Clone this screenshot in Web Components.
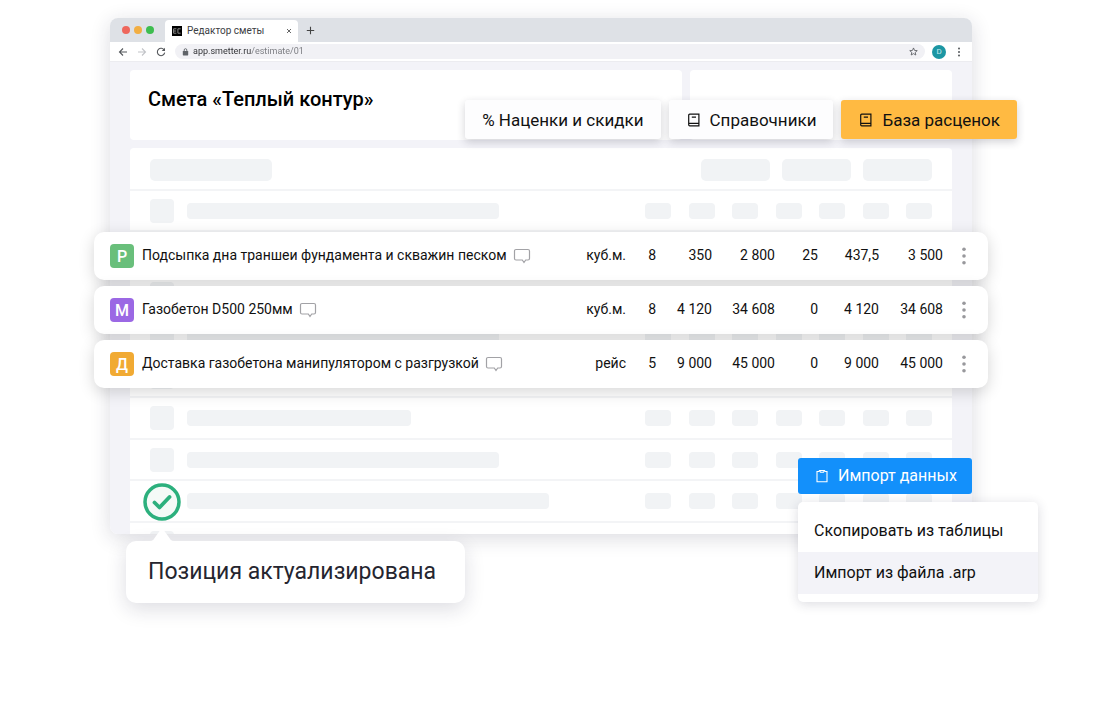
<!DOCTYPE html>
<html lang="ru">
<head>
<meta charset="utf-8">
<meta name="viewport" content="width=device-width, initial-scale=1">
<title>Редактор сметы</title>
<style>
  body { margin: 0; background: #fff; font-family: Roboto, "Liberation Sans", sans-serif; color: #111; }
</style>
</head>
<body>
<estimate-scene></estimate-scene>
<script>
const define = (name, html, init) => {
  const template = document.createElement('template');
  template.innerHTML = html;
  customElements.define(name, class extends HTMLElement {
    constructor() {
      super();
      this.attachShadow({ mode: 'open' }).append(template.content.cloneNode(true));
    }
    connectedCallback() { if (init) init.call(this, this.shadowRoot); }
  });
};

const BASE = `<style>
  *, *::before, *::after { box-sizing: border-box; }
  button { font: inherit; color: inherit; border: 0; padding: 0; margin: 0; background: none; cursor: pointer; }
  svg { display: block; flex: none; }
</style>`;

/* Tab strip and address bar */
define('browser-chrome', BASE + `<style>
  :host { display: block; color: #3c4043; }
  .tabs { display: flex; align-items: flex-end; height: 24px; padding: 0 12px; background: #dee1e6; border-radius: 8px 8px 0 0; }
  .lights { display: flex; gap: 4px; height: 24px; align-items: center; }
  .lights i { width: 8px; height: 8px; border-radius: 50%; background: #ee675c; }
  .lights i:nth-child(2) { background: #f2ae42; }
  .lights i:nth-child(3) { background: #3dbd4f; }
  .tab { display: flex; align-items: center; width: 133px; height: 22px; margin-left: 11px; padding: 0 6px 0 7px; background: #fff; border-radius: 4px 4px 0 0; }
  .tab .title { flex: 1; margin-left: 5px; font-size: 10px; line-height: 20px; text-align: left; white-space: nowrap; }
  .new { margin: 0 0 7px 8px; }
  .bar { display: flex; align-items: center; height: 20px; padding: 0 8px; background: #fff; border-bottom: 1px solid #ececf0; }
  .nav { display: flex; gap: 9px; }
  .url { flex: 1; display: flex; align-items: center; height: 15px; margin: 0 7px 0 9px; padding: 0 7px; border-radius: 8px; background: #f1f1f5; }
  input { flex: 1; min-width: 0; height: 15px; margin: 0 0 0 4px; padding: 0; border: 0; outline: 0; font: 9px/15px Roboto, sans-serif; color: #333;
    background: linear-gradient(90deg, #2d2e31 58px, #77787d 58px); -webkit-background-clip: text; background-clip: text; -webkit-text-fill-color: transparent; }
  .avatar { width: 14px; height: 14px; border-radius: 50%; background: #1c96a3; color: #c9edf0; font-size: 8px; line-height: 14px; text-align: center; }
  .more { margin-left: 8px; }
</style>
<div class="tabs">
  <div class="lights"><i></i><i></i><i></i></div>
  <div class="tab">
    <svg width="10" height="10" viewBox="0 0 10 10"><rect width="10" height="10" fill="#000"/><path d="M4.400 2.800H1.600v4.400h2.800M1.600 5h2.600M8.600 2.800H5.900v4.400h2.700" fill="none" stroke="#999" stroke-width=".9"/></svg>
    <span class="title">Редактор сметы</span>
    <button aria-label="Закрыть вкладку"><svg width="6" height="6" viewBox="0 0 6 6" stroke="#555" stroke-width=".9"><path d="M1 1l4 4M5 1l-4 4"/></svg></button>
  </div>
  <button class="new" aria-label="Новая вкладка"><svg width="9" height="9" viewBox="0 0 9 9" stroke="#444" stroke-width="1.100"><path d="M4.500 .8v7.400M.8 4.500h7.400"/></svg></button>
</div>
<div class="bar">
  <div class="nav">
    <button aria-label="Назад"><svg width="10" height="10" viewBox="0 0 10 10" fill="none" stroke="#55585c" stroke-width="1.100"><path d="M9 5H1.500M5 1.500L1.500 5 5 8.500"/></svg></button>
    <button aria-label="Вперёд"><svg width="10" height="10" viewBox="0 0 10 10" fill="none" stroke="#c2c4c8" stroke-width="1.100"><path d="M1 5h7.500M5 1.500L8.500 5 5 8.500"/></svg></button>
    <button aria-label="Обновить"><svg width="10" height="10" viewBox="0 0 10 10" fill="none" stroke="#55585c" stroke-width="1.100"><path d="M8.300 3.200A3.700 3.700 0 1 0 8.700 5.600"/><path d="M9 .8v3.300H5.700z" fill="#55585c" stroke="none"/></svg></button>
  </div>
  <div class="url">
    <svg width="7" height="8" viewBox="0 0 7 8"><rect x=".8" y="3" width="5.400" height="4.400" rx=".6" fill="#5f6368"/><path d="M2.200 3V2a1.300 1.300 0 0 1 2.600 0v1" fill="none" stroke="#5f6368" stroke-width=".9"/></svg>
    <input aria-label="Адрес" value="app.smetter.ru/estimate/01">
    <svg width="9" height="9" viewBox="0 0 24 24" fill="none" stroke="#55585c" stroke-width="2.200"><path d="M12 2.500l2.800 6.600 7.200.6-5.400 4.700 1.600 7-6.200-3.700-6.200 3.700 1.600-7L2 9.700l7.200-.6z"/></svg>
  </div>
  <button class="avatar" aria-label="Профиль">D</button>
  <button class="more" aria-label="Меню"><svg width="10" height="10" viewBox="0 0 10 10" fill="#55585c"><circle cx="5" cy="1.500" r="1"/><circle cx="5" cy="5" r="1"/><circle cx="5" cy="8.500" r="1"/></svg></button>
</div>`);

/* Placeholder rows of the estimate; "bars" lists the width of each name bar */
define('skeleton-list', BASE + `<style>
  :host { display: block; height: 386px; overflow: hidden; background: #fff; border-radius: 4px 4px 0 0; }
  .head, .row { display: flex; align-items: center; border-bottom: 2px solid #f3f4f6; padding: 0 20px; }
  .head { height: 43px; gap: 12px; padding-top: 2px; }
  .head i { width: 69px; height: 22px; border-radius: 5px; }
  .head i:first-child { width: 122px; margin-right: auto; }
  i { flex: none; background: #f1f3f5; border-radius: 4px; }
  .row { height: 41px; }
  .row:nth-child(odd) { height: 42px; }
  .row i { width: 26px; height: 16px; }
  .row .mark { width: 24px; height: 24px; margin-right: 13px; }
  .cells { display: flex; justify-content: space-between; width: 287px; margin-left: auto; }
</style>
<div class="head"><i></i><i></i><i></i><i></i></div>`, function (root) {
  for (const width of this.getAttribute('bars').split(' ')) {
    const row = document.createElement('div');
    row.className = 'row';
    row.innerHTML = `<i class="mark"></i><i style="width:${width}px"></i><div class="cells">${'<i></i>'.repeat(7)}</div>`;
    root.append(row);
  }
});

define('browser-window', BASE + `<style>
  :host { display: block; border-radius: 8px; box-shadow: 0 4px 20px rgba(30, 30, 60, .16); }
  .page { padding: 8px 20px 0; background: #f3f3f8; border-radius: 0 0 8px 8px; }
  .cards { display: grid; grid-template-columns: 552fr 262fr; gap: 8px; margin-bottom: 8px; }
  .card { height: 70px; background: #fff; border-radius: 4px; }
  .card:first-child { padding: 17px 18px; }
  h1 { margin: 0; font-size: 20px; line-height: 24px; font-weight: 500; color: #000; white-space: nowrap; }
</style>
<browser-chrome></browser-chrome>
<div class="page">
  <div class="cards"><div class="card"><h1><slot></slot></h1></div><div class="card"></div></div>
  <skeleton-list bars="312 312 312 312 312 224 312 362 312"></skeleton-list>
</div>`);

const ICONS = {
  book: '<svg width="14" height="14" viewBox="0 0 14 14" fill="none" stroke="currentColor" stroke-width="1.200"><path d="M2.700 1.200h9.200v11.600H2.700a1 1 0 0 1-1-1V2.200a1 1 0 0 1 1-1zM1.700 10.400h10.200M4.800 4.200h4.200"/></svg>',
  clipboard: '<svg width="14" height="14" viewBox="0 0 14 14" fill="none" stroke="currentColor" stroke-width="1.100"><path d="M4.500 2.500H2v10.300h10V2.500H9.500"/><path d="M4.500 1.500l1 1.800h3l1-1.800z"/></svg>'
};

define('action-button', BASE + `<style>
  :host { display: block; }
  button { display: flex; align-items: center; gap: 9px; height: 39px; padding: 0 17px; border-radius: 3px; background: #fdfdfe; color: #111; font-size: 17px; line-height: 24px; white-space: nowrap; box-shadow: 0 3px 8px rgba(30, 30, 50, .2); }
  :host([icon]) button { padding-left: 18px; }
  :host([tone=amber]) button { background: #ffba42; }
  :host([tone=blue]) button { width: 100%; height: 36px; padding: 0 17px; background: #1390fb; color: #fff; box-shadow: none; font-size: 16px; }
</style><button><slot></slot></button>`, function (root) {
  const icon = ICONS[this.getAttribute('icon')];
  if (icon) root.querySelector('button').insertAdjacentHTML('afterbegin', icon);
});

define('price-table', BASE + `<style>
  :host { display: block; }
  table, tbody { display: block; }
  tbody { display: grid; gap: 6px; }
  tr { display: grid; grid-template-columns: 1fr 60px 30px 56px 63px 43px 61px 64px 33px; align-items: center; height: 48px; padding: 0 12px 0 16px; background: #fff; border-radius: 10px; box-shadow: 0 4px 16px rgba(0, 0, 0, .16); font-size: 14px; line-height: 20px; }
  td { padding: 0 0 2px; text-align: right; white-space: nowrap; }
  td:first-child, td:last-child { display: flex; align-items: center; padding: 0; }
  td:last-child { justify-content: flex-end; }
  b { width: 24px; height: 24px; margin-right: 8px; border-radius: 4px; color: #fff; font-size: 16px; line-height: 25px; font-weight: 500; text-align: center; }
  .name { padding-bottom: 2px; }
  .note { margin-left: 6px; }
  .menu { width: 24px; height: 24px; display: grid; place-items: center; }
</style><table aria-label="Позиции сметы"><tbody></tbody></table>`, function (root) {
  const rows = [
    ['Р', '#69bf7b', 'Подсыпка дна траншеи фундамента и скважин песком', 'куб.м.', '8', '350', '2 800', '25', '437,5', '3 500'],
    ['М', '#9b68e4', 'Газобетон D500 250мм', 'куб.м.', '8', '4 120', '34 608', '0', '4 120', '34 608'],
    ['Д', '#f1aa33', 'Доставка газобетона манипулятором с разгрузкой', 'рейс', '5', '9 000', '45 000', '0', '9 000', '45 000']
  ];
  root.querySelector('tbody').innerHTML = rows.map(([mark, color, name, ...cells]) => `<tr>
    <td><b style="background:${color}">${mark}</b><span class="name">${name}</span><button class="note" aria-label="Комментарий"><svg width="18" height="16" viewBox="0 0 18 16" fill="none" stroke="#a2a2a6" stroke-width="1.200"><path d="M3 1.500h12a1.500 1.500 0 0 1 1.500 1.500v7.500a1.500 1.500 0 0 1-1.500 1.500h-2.300l-1.700 2.500-1.700-2.500H3A1.500 1.500 0 0 1 1.500 10.500V3A1.500 1.500 0 0 1 3 1.500z"/></svg></button></td>
    ${cells.map(c => `<td>${c}</td>`).join('')}
    <td><button class="menu" aria-label="Действия"><svg width="4" height="18" viewBox="0 0 4 18" fill="#98989c"><circle cx="2" cy="2.300" r="1.800"/><circle cx="2" cy="9" r="1.800"/><circle cx="2" cy="15.700" r="1.800"/></svg></button></td></tr>`).join('');
});

/* Success mark with a speech bubble below it */
define('status-tip', BASE + `<style>
  :host { display: block; }
  .mark { margin-left: 17px; }
  .arrow { margin: 8px 0 0 24px; }
  p { margin: 0; padding: 15px 22px; min-width: 339px; border-radius: 10px; background: #fff; color: #25252f; font-size: 23px; line-height: 32px; white-space: nowrap; box-shadow: 0 6px 20px rgba(30, 30, 60, .15); }
</style>
<svg class="mark" width="38" height="38" viewBox="0 0 38 38" fill="none" stroke="#2cb07d"><circle cx="19" cy="19" r="17" stroke-width="3.500" fill="#f4faf7"/><path d="M11.500 19.500l5 5 10-10.500" stroke-width="3.800" stroke-linecap="round" stroke-linejoin="round"/></svg>
<svg class="arrow" width="24" height="12" viewBox="0 0 24 12"><path d="M0 12c3 0 4-2 6-5l4-5.500c1-1.500 3-1.500 4 0L18 7c2 3 3 5 6 5z" fill="#fff"/></svg>
<p><slot></slot></p>`);

define('import-menu', BASE + `<style>
  :host { display: block; }
  action-button { width: 174px; }
  ul { list-style: none; margin: 8px 0 0; padding: 8px 0; border-radius: 5px; background: #fff; box-shadow: 0 2px 12px rgba(30, 30, 60, .16); }
  li button { display: block; width: 100%; height: 42px; padding: 0 16px; text-align: left; font-size: 16px; line-height: 24px; color: #111; }
  li.active { background: #f3f3f8; }
</style>
<action-button tone="blue" icon="clipboard">Импорт данных</action-button>
<ul><li><button>Скопировать из таблицы</button></li><li class="active"><button>Импорт из файла .arp</button></li></ul>`);

define('estimate-scene', BASE + `<style>
  :host { display: block; box-sizing: border-box; position: relative; min-height: 100vh; padding: 18px 144px 120px 110px; }
  .actions, price-table, status-tip, import-menu { position: absolute; }
  .actions { display: flex; gap: 8px; top: 100px; right: 99px; }
  price-table { top: 232px; left: 94px; right: 128px; }
  status-tip { top: 483px; left: 126px; }
  import-menu { top: 458px; right: 78px; width: 240px; }
</style>
<browser-window>Смета «Теплый контур»</browser-window>
<div class="actions">
  <action-button>% Наценки и скидки</action-button>
  <action-button icon="book">Справочники</action-button>
  <action-button icon="book" tone="amber">База расценок</action-button>
</div>
<price-table></price-table>
<status-tip>Позиция актуализирована</status-tip>
<import-menu></import-menu>`);
</script>
</body>
</html>
